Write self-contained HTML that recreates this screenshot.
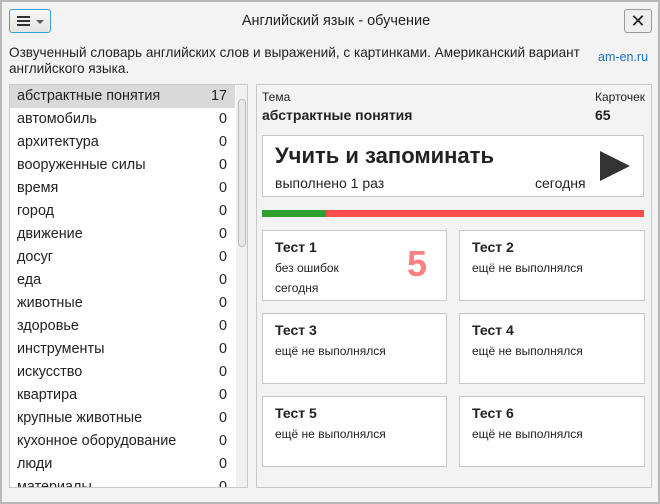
<!DOCTYPE html><html><head><style>
body{margin:0;width:660px;height:504px;background:#f3f3f3;font-family:"Liberation Sans",sans-serif;color:#222;position:relative;overflow:hidden}
.win{position:absolute;left:0;top:0;width:656px;height:500px;border:2px solid #b8b8b8;}
.a{position:absolute}
.btn{left:9px;top:9px;width:42px;height:24px;border:1px solid #3aa0d8;border-radius:3px;background:linear-gradient(#f8f8f8,#e4e4e4);box-sizing:border-box}
.list{left:9px;top:84px;width:239px;height:404px;background:#fff;border:1px solid #c8c8c8;box-sizing:border-box;overflow:hidden}
.row{height:23px;line-height:23px;font-size:14.4px;padding:0 0 0 7px;width:210px;position:relative}
.row span{position:absolute;right:0}
.rp{left:256px;top:84px;width:396px;height:404px;border:1px solid #c8c8c8;box-sizing:border-box}
.card{background:#fff;border:1px solid #c8c8c8;box-sizing:border-box;position:absolute}
.t{font-weight:bold;font-size:14px;position:absolute;left:12px;top:8px}
.s{font-size:12px;position:absolute;left:12px}
</style></head><body><div class="win"></div>
<div class="a btn"><div class="a" style="left:7px;top:6px;width:13px;height:2px;background:#333;box-shadow:0 4px 0 #333,0 8px 0 #333"></div><div class="a" style="left:26px;top:10px;border:4px solid transparent;border-top:4px solid #555"></div></div>
<div class="a" style="left:6px;width:660px;top:13px;text-align:center;font-size:14.5px">Английский язык - обучение</div>
<div class="a" style="left:624px;top:9px;width:28px;height:24px;border:1px solid #999;border-radius:3px;background:#eee;box-sizing:border-box;text-align:center;font-size:18px;line-height:22px">✕</div>
<div class="a" style="left:9px;top:45px;font-size:13.6px;line-height:16px;width:590px">Озвученный словарь английских слов и выражений, с картинками. Американский вариант английского языка.</div>
<div class="a" style="left:598px;top:50px;font-size:12.5px;color:#1a6fc0">am-en.ru</div>
<div class="a list">
<div class="row" style="background:#d9d9d9;width:218px;padding-right:0">абстрактные понятия<span style="right:8px">17</span></div>
<div class="row">автомобиль<span>0</span></div><div class="row">архитектура<span>0</span></div><div class="row">вооруженные силы<span>0</span></div><div class="row">время<span>0</span></div><div class="row">город<span>0</span></div><div class="row">движение<span>0</span></div><div class="row">досуг<span>0</span></div><div class="row">еда<span>0</span></div><div class="row">животные<span>0</span></div><div class="row">здоровье<span>0</span></div><div class="row">инструменты<span>0</span></div><div class="row">искусство<span>0</span></div><div class="row">квартира<span>0</span></div><div class="row">крупные животные<span>0</span></div><div class="row">кухонное оборудование<span>0</span></div><div class="row">люди<span>0</span></div><div class="row">материалы<span>0</span></div>
<div class="a" style="left:226px;top:0;width:12px;height:404px;background:#f0f0f0"></div>
<div class="a" style="left:228px;top:14px;width:8px;height:148px;background:#e8e8e8;border:1px solid #bbb;border-radius:4px;box-sizing:border-box"></div>
</div>
<div class="a rp">
<div class="a" style="left:5px;top:5px;font-size:12px">Тема</div>
<div class="a" style="left:5px;top:22px;font-size:14px;font-weight:bold">абстрактные понятия</div>
<div class="a" style="left:338px;top:5px;font-size:12px">Карточек</div>
<div class="a" style="left:338px;top:22px;font-size:14px;font-weight:bold">65</div>
<div class="card" style="left:5px;top:50px;width:382px;height:62px">
<div class="a" style="left:12px;top:7px;font-size:22px;font-weight:bold">Учить и запоминать</div>
<div class="a" style="left:12px;top:39px;font-size:14px">выполнено 1 раз</div>
<div class="a" style="left:272px;top:39px;font-size:14px">сегодня</div>
<div class="a" style="left:337px;top:15px;border-left:30px solid #333;border-top:15px solid transparent;border-bottom:15px solid transparent"></div></div>
<div class="a" style="left:5px;top:125px;width:64px;height:7px;background:#2ea02e"></div>
<div class="a" style="left:69px;top:125px;width:318px;height:7px;background:#ff4d4d"></div>
<div class="card" style="left:5px;top:145px;width:185px;height:71px"><div class="t">Тест 1</div><div class="s" style="top:30px">без ошибок</div><div class="s" style="top:50px">сегодня</div><div class="a" style="left:144px;top:12px;font-size:36px;font-weight:bold;color:#ff8080">5</div></div>
<div class="card" style="left:202px;top:145px;width:186px;height:71px"><div class="t">Тест 2</div><div class="s" style="top:30px">ещё не выполнялся</div></div>
<div class="card" style="left:5px;top:228px;width:185px;height:71px"><div class="t">Тест 3</div><div class="s" style="top:30px">ещё не выполнялся</div></div>
<div class="card" style="left:202px;top:228px;width:186px;height:71px"><div class="t">Тест 4</div><div class="s" style="top:30px">ещё не выполнялся</div></div>
<div class="card" style="left:5px;top:311px;width:185px;height:71px"><div class="t">Тест 5</div><div class="s" style="top:30px">ещё не выполнялся</div></div>
<div class="card" style="left:202px;top:311px;width:186px;height:71px"><div class="t">Тест 6</div><div class="s" style="top:30px">ещё не выполнялся</div></div>
</div>
</body></html>
